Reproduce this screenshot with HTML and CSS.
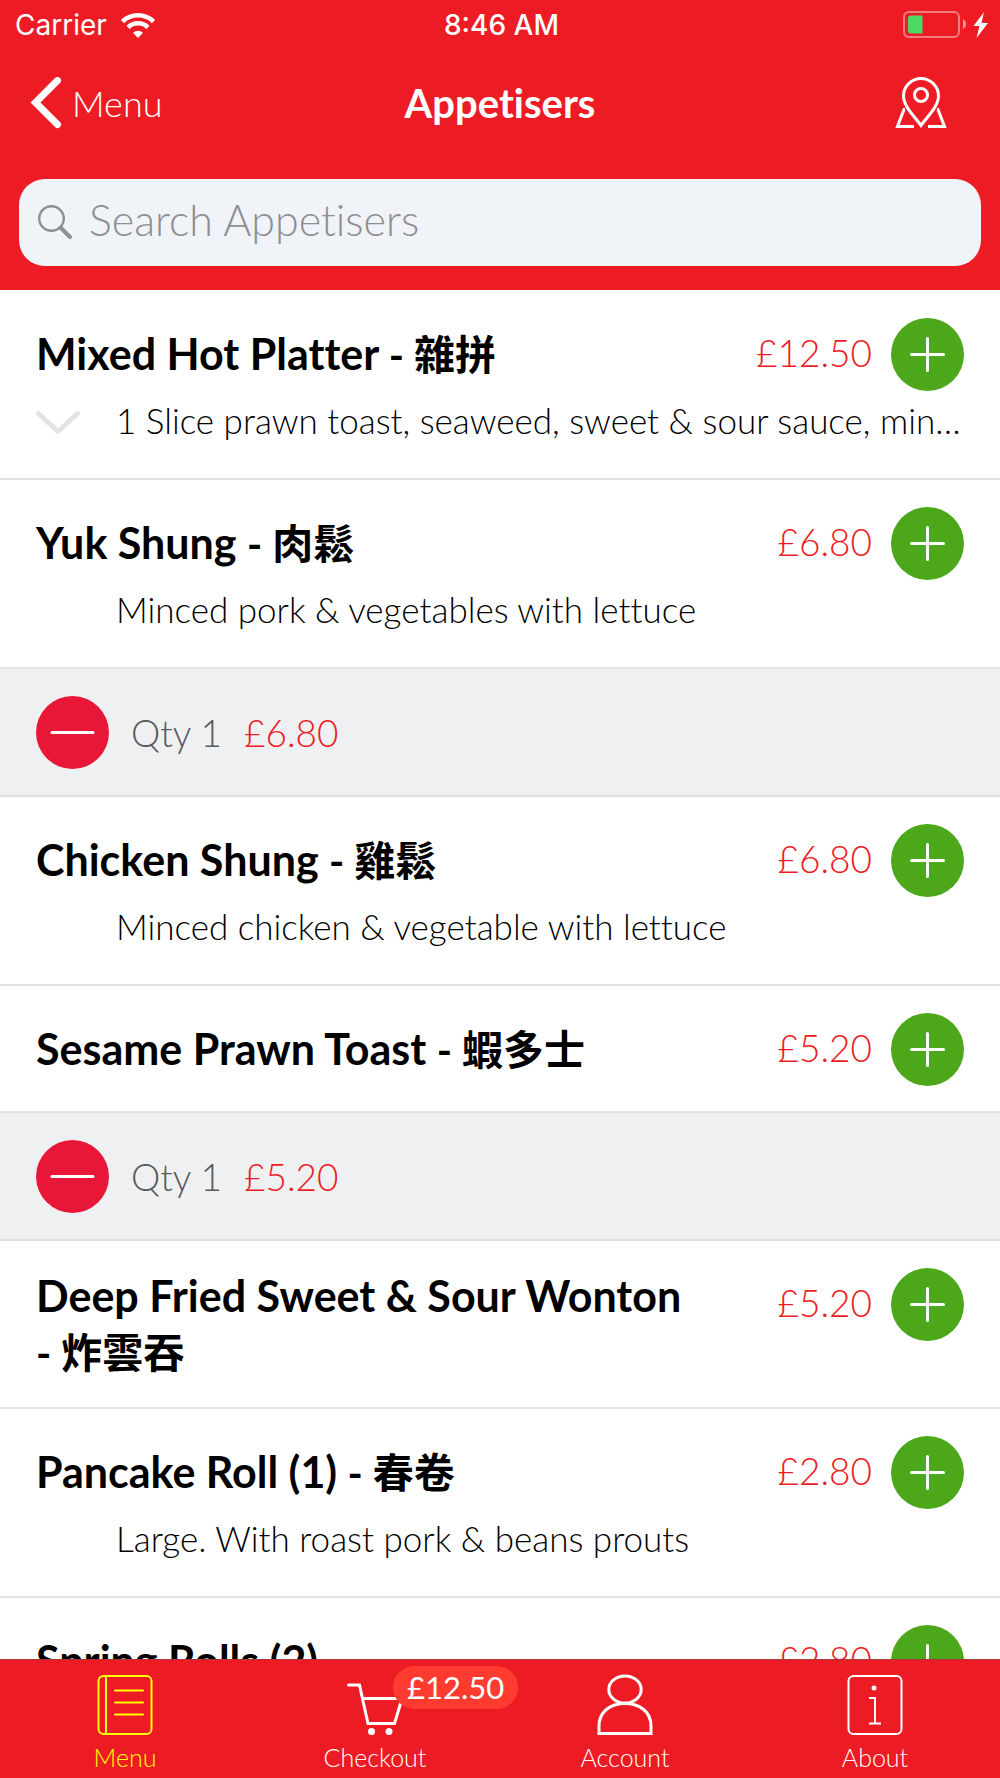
FILE: index.html
```html
<!DOCTYPE html>
<html lang="en">
<head>
<meta charset="utf-8">
<meta name="viewport" content="width=device-width, initial-scale=1">
<title>Appetisers</title>
<link rel="stylesheet" href="styles.css">
</head>
<body>
<svg class="defs" aria-hidden="true">
  <symbol id="plus" viewBox="0 0 73 73"><path d="M36.500 20.500v32M20.500 36.500h32" fill="none" stroke="#fff" stroke-width="3" stroke-linecap="round"/></symbol>
  <symbol id="minus" viewBox="0 0 73 73"><path d="M16 36.500h41" fill="none" stroke="#fff" stroke-width="3" stroke-linecap="round"/></symbol>
</svg>
<div class="app">
  <header class="header">
    <div class="status">
      <div class="status-left">
        <span>Carrier</span>
        <svg width="34" height="25" viewBox="0 0 34 25" fill="none" stroke="#fff" aria-label="Wi-Fi">
          <path d="M1.500 8.500a22.500 22.500 0 0 1 31 0" stroke-width="4.600"/>
          <path d="M7 14.300a14.500 14.500 0 0 1 20 0" stroke-width="4.400"/>
          <path d="M17 25l-5-5.300a7.500 7.500 0 0 1 10 0z" fill="#fff" stroke="none"/>
        </svg>
      </div>
      <time class="clock">8:46 AM</time>
      <div class="status-right">
        <svg width="86" height="30" viewBox="0 0 86 30" aria-label="Battery charging">
          <rect x="2" y="2" width="55" height="25" rx="5" fill="none" stroke="#fff" stroke-opacity=".42" stroke-width="2"/>
          <path d="M9 5.500h11.500v18H9a3 3 0 0 1-3-3v-12a3 3 0 0 1 3-3z" fill="#4cd964"/>
          <path d="M61 9c4 2 4 8 0 10z" fill="#fff" fill-opacity=".5"/>
          <path d="M82 2L71.500 16h6l-3 12L86 13h-6.500z" fill="#fff"/>
        </svg>
      </div>
    </div>
    <nav class="navbar">
      <a class="back" href="#menu">
        <svg width="32" height="52" viewBox="0 0 32 52" fill="none" stroke="#fff" stroke-width="7" stroke-linecap="round" aria-hidden="true"><path d="M27.500 3.500L5.500 25.500 27.500 47.500" stroke-linejoin="miter"/></svg>
        <span>Menu</span>
      </a>
      <h1 class="title">Appetisers</h1>
      <a class="map" href="#map" aria-label="Map">
        <svg width="52" height="52" viewBox="0 0 52 52" fill="none" stroke="#fff" stroke-width="3">
          <path d="M26 48.500C21 41 8.500 30 8.500 19a17.500 17.500 0 0 1 35 0C43.500 30 31 41 26 48.500z"/>
          <circle cx="26" cy="18" r="6.500"/>
          <path d="M10 32.500H9L2.500 49.500H19M42 32.500h1L49.500 49.500H33"/>
        </svg>
      </a>
    </nav>
    <form class="search" role="search">
      <svg width="34" height="34" viewBox="0 0 34 34" fill="none" stroke="#8e8e93" aria-hidden="true"><circle cx="13.500" cy="13.500" r="12.300" stroke-width="2.400"/><path d="M22.500 22.500l9.500 9.500" stroke-width="4" stroke-linecap="round"/></svg>
      <input type="search" placeholder="Search Appetisers" aria-label="Search Appetisers">
    </form>
  </header>

  <main class="content">
    <ul class="menu">
      <li class="item">
        <h2 class="name">Mixed Hot Platter <span class="zh">- <span lang="zh-Hant">雜拼</span></span></h2>
        <span class="price">£12.50</span>
        <button class="round add" type="button" aria-label="Add Mixed Hot Platter"><svg><use href="#plus"/></svg></button>
        <button class="expand" type="button" aria-label="Show full description"><svg width="44" height="26" viewBox="0 0 44 26" fill="none" stroke="#e3e3e5" stroke-width="5" stroke-linecap="round" stroke-linejoin="round"><path d="M2.500 4.500L22 22.500 41.500 4.500"/></svg></button>
        <p class="desc">1 Slice prawn toast, seaweed, sweet &amp; sour sauce, min…</p>
      </li>
      <li class="item">
        <h2 class="name">Yuk Shung <span class="zh">- <span lang="zh-Hant">肉鬆</span></span></h2>
        <span class="price">£6.80</span>
        <button class="round add" type="button" aria-label="Add Yuk Shung"><svg><use href="#plus"/></svg></button>
        <p class="desc">Minced pork &amp; vegetables with lettuce</p>
      </li>
      <li class="qty">
        <button class="round remove" type="button" aria-label="Remove Yuk Shung"><svg><use href="#minus"/></svg></button>
        <span>Qty 1</span><span class="price">£6.80</span>
      </li>
      <li class="item">
        <h2 class="name">Chicken Shung <span class="zh">- <span lang="zh-Hant">雞鬆</span></span></h2>
        <span class="price">£6.80</span>
        <button class="round add" type="button" aria-label="Add Chicken Shung"><svg><use href="#plus"/></svg></button>
        <p class="desc">Minced chicken &amp; vegetable with lettuce</p>
      </li>
      <li class="item">
        <h2 class="name">Sesame Prawn Toast <span class="zh">- <span lang="zh-Hant">蝦多士</span></span></h2>
        <span class="price">£5.20</span>
        <button class="round add" type="button" aria-label="Add Sesame Prawn Toast"><svg><use href="#plus"/></svg></button>
      </li>
      <li class="qty">
        <button class="round remove" type="button" aria-label="Remove Sesame Prawn Toast"><svg><use href="#minus"/></svg></button>
        <span>Qty 1</span><span class="price">£5.20</span>
      </li>
      <li class="item">
        <h2 class="name">Deep Fried Sweet &amp; Sour Wonton <span class="zh">- <span lang="zh-Hant">炸雲吞</span></span></h2>
        <span class="price">£5.20</span>
        <button class="round add" type="button" aria-label="Add Deep Fried Sweet &amp; Sour Wonton"><svg><use href="#plus"/></svg></button>
      </li>
      <li class="item">
        <h2 class="name">Pancake Roll (1) <span class="zh">- <span lang="zh-Hant">春卷</span></span></h2>
        <span class="price">£2.80</span>
        <button class="round add" type="button" aria-label="Add Pancake Roll"><svg><use href="#plus"/></svg></button>
        <p class="desc">Large. With roast pork &amp; beans prouts</p>
      </li>
      <li class="item">
        <h2 class="name">Spring Rolls (2)</h2>
        <span class="price">£2.80</span>
        <button class="round add" type="button" aria-label="Add Spring Rolls"><svg><use href="#plus"/></svg></button>
      </li>
    </ul>
  </main>

  <nav class="tabs">
    <a class="tab active" href="#menu">
      <svg width="56" height="62" viewBox="0 0 56 62" fill="none" stroke="#ff0" stroke-width="2" stroke-linecap="round" aria-hidden="true"><rect x="1.500" y="2" width="53" height="58" rx="5"/><path d="M9 2v58M18 16.500h28M18 28.500h28M18 40.500h28"/></svg>
      <span>Menu</span>
    </a>
    <a class="tab" href="#checkout">
      <span class="cart">
        <svg width="56" height="62" viewBox="0 0 56 62" fill="none" stroke="#fff" stroke-width="3" stroke-linecap="round" aria-hidden="true"><path d="M1.500 11H12.500L21 49.500H47.500L55 24.500H16"/><circle cx="24.500" cy="57.500" r="3.500" fill="#fff" stroke="none"/><circle cx="42" cy="57.500" r="3.500" fill="#fff" stroke="none"/></svg>
        <span class="badge">£12.50</span>
      </span>
      <span>Checkout</span>
    </a>
    <a class="tab" href="#account">
      <svg width="56" height="62" viewBox="0 0 56 62" fill="none" stroke="#fff" stroke-width="3" aria-hidden="true"><ellipse cx="28" cy="15.500" rx="16.200" ry="13.500"/><path d="M2 59.500V52C2 38 13 29.500 28 29.500S54 38 54 52v7.500z"/></svg>
      <span>Account</span>
    </a>
    <a class="tab" href="#about">
      <svg width="56" height="62" viewBox="0 0 56 62" fill="none" stroke="#fff" stroke-width="2" aria-hidden="true"><rect x="1.500" y="2" width="53" height="58" rx="5"/><circle cx="27" cy="14" r="2.500" fill="#fff" stroke="none"/><path d="M22 24h6v25.500M22 49.500h12"/></svg>
      <span>About</span>
    </a>
  </nav>
</div>
</body>
</html>
```
FILE: styles.css
```css
* {
  box-sizing: border-box;
}

body {
  margin: 0;
  background: #fff;
  color: #000;
  font-family: Lato, "Noto Sans CJK TC", sans-serif;
  font-weight: 300;
  font-variant-ligatures: none;
}

a {
  color: inherit;
  text-decoration: none;
}

button {
  padding: 0;
  border: 0;
  background: none;
}

svg {
  display: block;
  flex: none;
}

.defs {
  display: none;
}

.app {
  display: flex;
  flex-direction: column;
  height: 100vh;
}

/* Header */
.header {
  flex: none;
  padding-bottom: 24px;
  background: #ed1c24;
  color: #fff;
}

.status {
  display: grid;
  grid-template-columns: 1fr auto 1fr;
  align-items: center;
  height: 50px;
  padding: 0 12px 0 15px;
  font: 400 28px/50px Inter, sans-serif;
}

.status-left {
  display: flex;
  align-items: center;
  gap: 14px;
}

.status-right {
  display: flex;
  justify-content: flex-end;
}

.clock {
  font-weight: 500;
}

.navbar {
  display: grid;
  grid-template-columns: 1fr auto 1fr;
  align-items: center;
  height: 105px;
  padding: 0 30px;
}

.back {
  display: flex;
  align-items: center;
  gap: 10px;
  font-size: 36px;
}

.title {
  margin: 0;
  font-size: 40px;
  font-weight: 700;
}

.map {
  justify-self: end;
  margin-right: 23px;
}

.search {
  display: flex;
  align-items: center;
  gap: 17px;
  height: 87px;
  margin: 24px 19px 0;
  padding: 0 19px 2px;
  border-radius: 26px;
  background: #f0f3f8;
}

.search input {
  flex: 1;
  min-width: 0;
  padding: 0 0 4px;
  border: 0;
  outline: 0;
  background: none;
  color: #000;
  font: inherit;
  font-size: 43px;
}

.search input::placeholder {
  color: #8e8e93;
  opacity: 1;
}

/* Dish list */
.content {
  flex: 1;
  min-height: 0;
  overflow-y: auto;
  scrollbar-width: none;
}

.menu {
  margin: 0;
  padding: 1px 0 0;
  list-style: none;
}

.item {
  display: grid;
  grid-template-columns: 80px 1fr 140px 73px;
  align-items: start;
  padding: 27px 36px 25px;
  border-bottom: 2px solid #e2e2e3;
}

.name {
  grid-column: 1 / 3;
  align-self: center;
  margin: 0;
  padding-bottom: 2px;
  font-size: 43px;
  font-weight: 700;
  line-height: 56px;
}

.zh {
  font-size: 41px;
  line-height: 1;
  white-space: nowrap;
}

.price {
  color: #ed1c24;
  font-size: 37px;
}

.item .price {
  padding-right: 19px;
  line-height: 70px;
  text-align: right;
}

.round {
  width: 73px;
  height: 73px;
  border-radius: 50%;
}

.round svg {
  width: 73px;
  height: 73px;
}

.add {
  background: #4ca71a;
}

.remove {
  background: #e91737;
}

.expand {
  display: flex;
  align-items: center;
  grid-row: 2;
  grid-column: 1;
  height: 62px;
}

.desc {
  grid-row: 2;
  grid-column: 2 / 5;
  height: 62px;
  margin: 0;
  overflow: hidden;
  font-size: 35px;
  line-height: 58px;
  text-overflow: ellipsis;
  white-space: nowrap;
}

.qty {
  display: flex;
  align-items: center;
  gap: 22px;
  padding: 27px 36px 26px;
  border-bottom: 2px solid #dfdfe1;
  background: #eff0f2;
  color: #58595b;
  font-size: 37px;
}

/* Tab bar */
.tabs {
  display: grid;
  flex: none;
  grid-template-columns: repeat(4, 1fr);
  border-top: 1px solid #a8383c;
  background: #ed1c24;
  color: #fff;
}

.tab {
  display: flex;
  flex-direction: column;
  align-items: center;
  gap: 6px;
  padding: 14px 0 5px;
  font-size: 25px;
  line-height: 31px;
}

.tab.active {
  color: #ff0;
}

.cart {
  position: relative;
}

.badge {
  position: absolute;
  top: -8px;
  left: 46px;
  padding: 0 14px;
  border-radius: 22px;
  background: #ff3b30;
  font-size: 31px;
  font-weight: 400;
  line-height: 43px;
}
```
